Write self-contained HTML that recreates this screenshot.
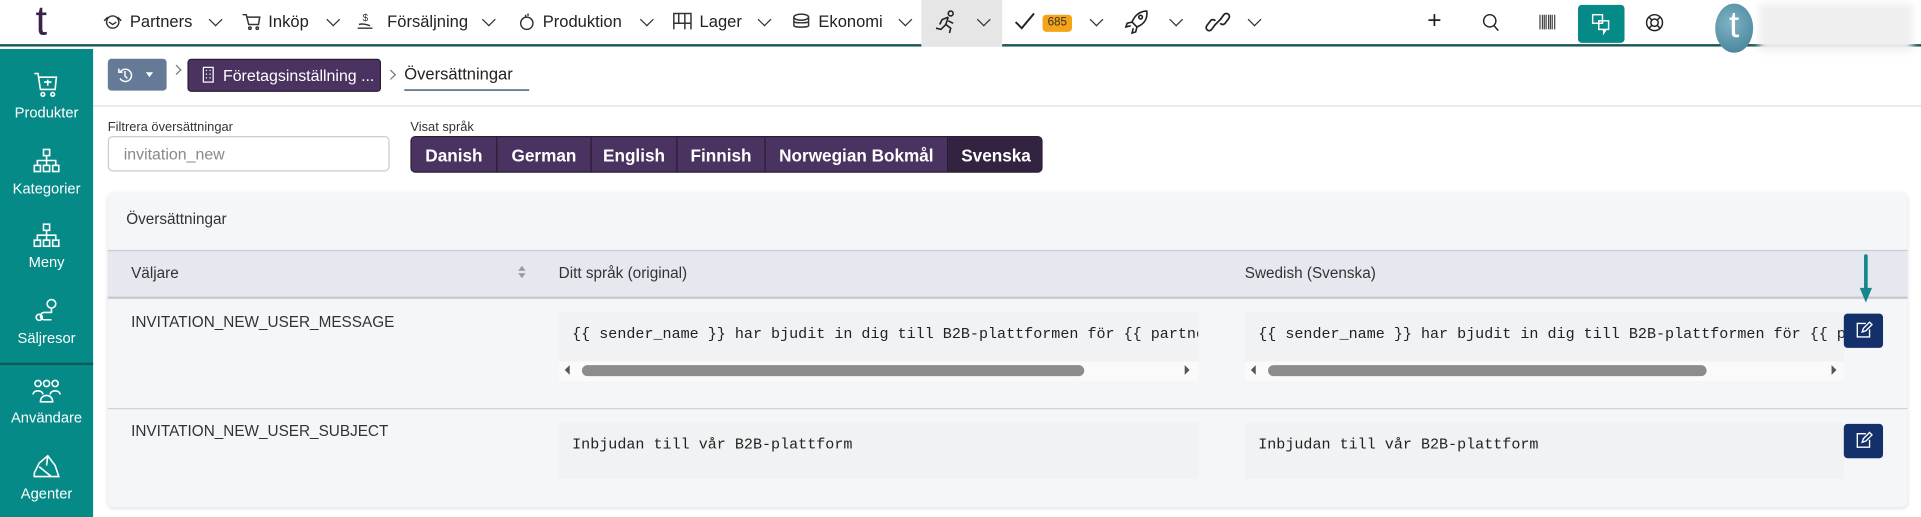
<!DOCTYPE html>
<html><head><meta charset="utf-8">
<style>
*{box-sizing:border-box;margin:0;padding:0}
html,body{width:1921px;height:516px;overflow:hidden;background:#fff}
#w{position:absolute;left:0;top:0;width:1568px;height:421.2px;transform:scale(1.22513);transform-origin:0 0;font-family:"Liberation Sans",sans-serif;color:#222}
.a{position:absolute}
.nav{font-size:13.5px;color:#222;top:10px;white-space:nowrap}
.chev{position:absolute;top:12px;width:8px;height:8px;border-right:1.2px solid #333;border-bottom:1.2px solid #333;transform:rotate(45deg)}
svg{position:absolute;overflow:visible}
.side{position:absolute;left:0;width:76px;text-align:center;color:#fff;font-size:12px}
.btn{position:absolute;top:0;height:30px;line-height:30px;color:#fff;font-weight:bold;font-size:14px;text-align:center;border-right:1px solid #2a1d35}
.code{position:absolute;background:#f1f2f3;font-family:"Liberation Mono",monospace;font-size:12.3px;color:#222;white-space:nowrap;overflow:hidden}
.edit{position:absolute;width:32px;height:28px;background:#13306a;border-radius:3px}
</style></head><body><div id="w">
<!-- top nav -->
<div class="a" style="left:0;top:0;width:1568px;height:38px;background:#fff;border-bottom:2px solid #1d5657"></div>
<div class="a" style="left:29px;top:0;font-size:34px;color:#3a2248;font-family:'Liberation Sans',sans-serif;line-height:34px">t</div>
<svg style="left:84px;top:11px" width="16" height="14" viewBox="0 0 16 14" fill="none" stroke="#333" stroke-width="1.2"><circle cx="8" cy="7" r="5"/><path d="M1 6l3-3M15 6l-3-3M5 7l3 2 3-2"/></svg>
<div class="a nav" style="left:106px">Partners</div><div class="chev" style="left:172px"></div>
<svg style="left:198px;top:11px" width="15" height="14" viewBox="0 0 15 14" fill="none" stroke="#333" stroke-width="1.2"><path d="M0 1h3l2 8h8l1-6H4"/><circle cx="6" cy="12" r="1"/><circle cx="12" cy="12" r="1"/></svg>
<div class="a nav" style="left:219px">Inköp</div><div class="chev" style="left:268px"></div>
<svg style="left:291px;top:9px" width="15" height="16" viewBox="0 0 15 16" fill="none" stroke="#333" stroke-width="1.2"><path d="M1 14h12M2 11c3-1 6 0 9 1"/><text x="5" y="8" font-size="8" fill="#333" stroke="none">$</text></svg>
<div class="a nav" style="left:316px">Försäljning</div><div class="chev" style="left:395px"></div>
<svg style="left:423px;top:9px" width="14" height="16" viewBox="0 0 14 16" fill="none" stroke="#333" stroke-width="1.2"><circle cx="7" cy="10" r="5"/><path d="M6 3v2M8 2v2"/></svg>
<div class="a nav" style="left:443px">Produktion</div><div class="chev" style="left:524px"></div>
<svg style="left:549px;top:10px" width="16" height="15" viewBox="0 0 16 15" fill="none" stroke="#333" stroke-width="1.2"><path d="M1 14V1h14v13M1 9h14M5 1v8M10 1v13"/></svg>
<div class="a nav" style="left:571px">Lager</div><div class="chev" style="left:620px"></div>
<svg style="left:647px;top:11px" width="15" height="13" viewBox="0 0 15 13" fill="none" stroke="#333" stroke-width="1.2"><ellipse cx="7" cy="3" rx="6" ry="2.5"/><path d="M1 3v7c0 1.5 12 1.5 12 0V3M1 6.5c0 1.5 12 1.5 12 0"/></svg>
<div class="a nav" style="left:668px">Ekonomi</div><div class="chev" style="left:735px"></div>
<div class="a" style="left:752px;top:0;width:66px;height:38px;background:#e6e6e6"></div>
<svg style="left:762px;top:8px" width="20" height="20" viewBox="0 0 20 20" fill="none" stroke="#222" stroke-width="1.3"><circle cx="14" cy="3" r="2"/><path d="M12 6l-5 2-2 4M12 6l-2 6 4 3-1 4M10 12l-4 4-4-1M12 9l4 2"/></svg>
<div class="chev" style="left:799px"></div>
<svg style="left:828px;top:10px" width="17" height="15" viewBox="0 0 17 15" fill="none" stroke="#222" stroke-width="1.6"><path d="M1 8l5 5L16 1"/></svg>
<div class="a" style="left:851px;top:12px;width:24px;height:14px;background:#f4a416;border-radius:3px;font-size:9.5px;color:#333;text-align:center;line-height:14px">685</div>
<div class="chev" style="left:891px"></div>
<svg style="left:918px;top:8px" width="20" height="20" viewBox="0 0 20 20" fill="none" stroke="#222" stroke-width="1.3"><path d="M18 1c-6 0-10 4-12 9l4 4c5-2 9-6 8-13zM6 10l-4 1-1 3 4-1M10 14l-1 4-3 1 1-4"/><circle cx="13" cy="6" r="1.5"/></svg>
<div class="chev" style="left:956px"></div>
<svg style="left:984px;top:8px" width="20" height="20" viewBox="0 0 20 20" fill="none" stroke="#222" stroke-width="1.4"><path d="M8 12l-3 4a2.5 2.5 0 0 1-4-3l3-4a2.5 2.5 0 0 1 4 0M12 8l3-4a2.5 2.5 0 0 1 4 3l-3 4a2.5 2.5 0 0 1-4 0M7 13l6-6"/></svg>
<div class="chev" style="left:1020px"></div>
<div class="a" style="left:1165px;top:6px;font-size:20px;color:#222">+</div>
<svg style="left:1210px;top:11px" width="14" height="15" viewBox="0 0 14 15" fill="none" stroke="#222" stroke-width="1.2"><circle cx="6" cy="6" r="5"/><path d="M9.5 10l3.5 4"/></svg>
<svg style="left:1256px;top:12px" width="14" height="12" viewBox="0 0 14 12" stroke="#444" stroke-width="1"><path d="M1 0v12M3 0v12M4.5 0v12M6 0v12M8 0v12M9.5 0v12M11 0v12M13 0v12"/></svg>
<div class="a" style="left:1288px;top:4px;width:38px;height:31px;background:#068a87;border-radius:3px"></div>
<svg style="left:1299px;top:11px" width="16" height="17" viewBox="0 0 16 17" fill="none" stroke="#fff" stroke-width="1.2"><rect x="1" y="1" width="8" height="7"/><rect x="6" y="6" width="8" height="7"/><path d="M10 13v3l2-3"/></svg>
<svg style="left:1343px;top:11px" width="15" height="15" viewBox="0 0 15 15" fill="none" stroke="#222" stroke-width="1.2"><circle cx="7.5" cy="7.5" r="6.5"/><circle cx="7.5" cy="7.5" r="3"/><path d="M3 3l2.3 2.3M12 3l-2.3 2.3M3 12l2.3-2.3M12 12l-2.3-2.3"/></svg>
<div class="a" style="left:1400px;top:3px;width:31px;height:40px;border-radius:50%;background:radial-gradient(circle at 40% 40%,#7fb3c4,#3e7c93);color:#fff;font-size:30px;text-align:center;line-height:36px">t</div>
<div class="a" style="left:1436px;top:3px;width:125px;height:39px;background:#efefef;filter:blur(3px)"></div>
<!-- sidebar -->
<div class="a" style="left:0;top:40px;width:76px;height:382px;background:#068a87"></div>
<div class="a" style="left:0;top:296px;width:76px;height:2px;background:#13595a"></div>
<svg style="left:28px;top:59px" width="20" height="22" viewBox="0 0 20 22" fill="none" stroke="#fff" stroke-width="1.3"><path d="M0 1h3l2 13h12l1-10H4M8 8h6M11 6v5"/><circle cx="7" cy="18" r="1.5"/><circle cx="15" cy="18" r="1.5"/></svg>
<div class="side" style="top:85px">Produkter</div>
<svg style="left:27px;top:121px" width="22" height="20" viewBox="0 0 22 20" fill="none" stroke="#fff" stroke-width="1.3"><rect x="8.5" y="1" width="5" height="5"/><rect x="1" y="14" width="5" height="5"/><rect x="8.5" y="14" width="5" height="5"/><rect x="16" y="14" width="5" height="5"/><path d="M11 6v8M3.5 14v-4h15v4"/></svg>
<div class="side" style="top:147px">Kategorier</div>
<svg style="left:27px;top:182px" width="22" height="20" viewBox="0 0 22 20" fill="none" stroke="#fff" stroke-width="1.3"><rect x="8.5" y="1" width="5" height="5"/><rect x="1" y="14" width="5" height="5"/><rect x="8.5" y="14" width="5" height="5"/><rect x="16" y="14" width="5" height="5"/><path d="M11 6v8M3.5 14v-4h15v4"/></svg>
<div class="side" style="top:207px">Meny</div>
<svg style="left:28px;top:243px" width="20" height="22" viewBox="0 0 20 22" fill="none" stroke="#fff" stroke-width="1.3"><circle cx="14" cy="5" r="3.5"/><circle cx="4" cy="16" r="2.5"/><path d="M14 9v3H8a3 3 0 0 0 0 6h6"/></svg>
<div class="side" style="top:269px">Säljresor</div>
<svg style="left:26px;top:309px" width="24" height="20" viewBox="0 0 24 20" fill="none" stroke="#fff" stroke-width="1.3"><circle cx="5" cy="4" r="2.5"/><circle cx="12" cy="4" r="2.5"/><circle cx="19" cy="4" r="2.5"/><path d="M1 13c0-4 8-4 8 0M15 13c0-4 8-4 8 0M7 19c0-7 10-7 10 0z"/></svg>
<div class="side" style="top:334px">Användare</div>
<svg style="left:27px;top:371px" width="22" height="20" viewBox="0 0 22 20" fill="none" stroke="#fff" stroke-width="1.3"><path d="M1 18h20l-3-9-6-8-7 6-4 8zM5 10l10 8M12 1l-1 8"/></svg>
<div class="side" style="top:396px">Agenter</div>
<!-- breadcrumb -->
<div class="a" style="left:88px;top:48px;width:48px;height:26px;background:#647a96;border-radius:3px"></div>
<svg style="left:96px;top:55px" width="12" height="13" viewBox="0 0 12 13" fill="none" stroke="#fff" stroke-width="1.2"><path d="M2 4a5 5 0 1 1 0 5M1 1v3h3M6 3v4l2 2"/></svg>
<div class="a" style="left:119px;top:59px;width:0;height:0;border-left:3.5px solid transparent;border-right:3.5px solid transparent;border-top:4px solid #fff"></div>
<div class="a" style="left:141px;top:54px;width:6px;height:6px;border-right:1px solid #777;border-top:1px solid #777;transform:rotate(45deg)"></div>
<div class="a" style="left:153px;top:48px;width:158px;height:27px;background:#4a3360;border:1px solid #2a1d35;border-radius:3px;color:#fff;font-size:13px;line-height:25px;padding-left:28px">Företagsinställning ...</div>
<svg style="left:165px;top:54px" width="10" height="14" viewBox="0 0 10 14" fill="none" stroke="#fff" stroke-width="1"><rect x="1" y="1" width="8" height="12"/><path d="M3.5 3v1M6.5 3v1M3.5 6v1M6.5 6v1M3.5 9v1M6.5 9v1"/></svg>
<div class="a" style="left:316px;top:58px;width:6px;height:6px;border-right:1px solid #777;border-top:1px solid #777;transform:rotate(45deg)"></div>
<div class="a" style="left:330px;top:53px;font-size:13.5px;color:#222">Översättningar</div>
<div class="a" style="left:330px;top:73px;width:102px;height:1px;background:#1d3d5e"></div>
<div class="a" style="left:76px;top:86px;width:1492px;height:1px;background:#ddd"></div>
<!-- filters -->
<div class="a" style="left:88px;top:98px;font-size:10.5px;color:#333">Filtrera översättningar</div>
<div class="a" style="left:88px;top:111px;width:230px;height:29px;border:1px solid #c9ccd2;border-radius:4px;font-size:13px;color:#888;padding:6px 0 0 12px">invitation_new</div>
<div class="a" style="left:335px;top:98px;font-size:10.5px;color:#333">Visat språk</div>
<div class="a" style="left:335px;top:111px;width:516px;height:30px;background:#4a3360;border-radius:4px;overflow:hidden;border:1px solid #2a1d35">
<div class="btn" style="left:0;width:70px">Danish</div>
<div class="btn" style="left:70px;width:77px">German</div>
<div class="btn" style="left:147px;width:70px">English</div>
<div class="btn" style="left:217px;width:72px">Finnish</div>
<div class="btn" style="left:289px;width:149px">Norwegian Bokmål</div>
<div class="btn" style="left:438px;width:78px;background:#322340;border:none">Svenska</div>
</div>
<!-- card -->
<div class="a" style="left:88px;top:157px;width:1469px;height:257px;background:#f5f6f8;border-radius:5px;box-shadow:0 1px 3px rgba(0,0,0,.12)"></div>
<div class="a" style="left:103px;top:172px;font-size:12.5px;color:#333">Översättningar</div>
<div class="a" style="left:88px;top:204px;width:1469px;height:40px;background:#e6e8ef;border-top:1px solid #c8ccd2;border-bottom:2px solid #c8ccd2"></div>
<div class="a" style="left:107px;top:216px;font-size:12.5px;color:#333">Väljare</div>
<div class="a" style="left:423px;top:217px;border-left:3.5px solid transparent;border-right:3.5px solid transparent;border-bottom:4px solid #999"></div>
<div class="a" style="left:423px;top:223px;border-left:3.5px solid transparent;border-right:3.5px solid transparent;border-top:4px solid #999"></div>
<div class="a" style="left:456px;top:216px;font-size:12.5px;color:#333">Ditt språk (original)</div>
<div class="a" style="left:1016px;top:216px;font-size:12.5px;color:#333">Swedish (Svenska)</div>
<svg style="left:1517px;top:207px" width="12" height="40" viewBox="0 0 12 40"><path d="M6 2v28" stroke="#15868a" stroke-width="3" stroke-linecap="round"/><path d="M1 28h10l-5 12z" fill="#15868a"/></svg>
<div class="a" style="left:107px;top:256px;font-size:12.5px;color:#333">INVITATION_NEW_USER_MESSAGE</div>
<div class="code" style="left:456px;top:255px;width:522px;height:56px"><div style="padding:11px 0 0 11px">{{ sender_name }} har bjudit in dig till B2B-plattformen för {{ partner_name }}</div>
<div class="a" style="left:0;top:40px;width:522px;height:16px;background:#fafafa"></div>
<div class="a" style="left:19px;top:43px;width:410px;height:9px;background:#8c8c8c;border-radius:5px"></div>
<div class="a" style="left:5px;top:43px;border-top:4px solid transparent;border-bottom:4px solid transparent;border-right:4px solid #555"></div>
<div class="a" style="left:511px;top:43px;border-top:4px solid transparent;border-bottom:4px solid transparent;border-left:4px solid #555"></div></div>
<div class="code" style="left:1016px;top:255px;width:489px;height:56px"><div style="padding:11px 0 0 11px">{{ sender_name }} har bjudit in dig till B2B-plattformen för {{ partner_name }}</div>
<div class="a" style="left:0;top:40px;width:489px;height:16px;background:#fafafa"></div>
<div class="a" style="left:19px;top:43px;width:358px;height:9px;background:#8c8c8c;border-radius:5px"></div>
<div class="a" style="left:5px;top:43px;border-top:4px solid transparent;border-bottom:4px solid transparent;border-right:4px solid #555"></div>
<div class="a" style="left:479px;top:43px;border-top:4px solid transparent;border-bottom:4px solid transparent;border-left:4px solid #555"></div></div>
<div class="edit" style="left:1505px;top:256px"></div>
<svg style="left:1515px;top:262px" width="13" height="14" viewBox="0 0 13 14" fill="none" stroke="#fff" stroke-width="1.1"><path d="M8 2H1v11h10V7M5 9l1-3 5-5 2 2-5 5z"/></svg>
<div class="a" style="left:88px;top:333px;width:1469px;height:1px;background:#d0d3d8"></div>
<div class="a" style="left:107px;top:345px;font-size:12.5px;color:#333">INVITATION_NEW_USER_SUBJECT</div>
<div class="code" style="left:456px;top:345px;width:522px;height:46px;padding:11px 0 0 11px">Inbjudan till vår B2B-plattform</div>
<div class="code" style="left:1016px;top:345px;width:489px;height:46px;padding:11px 0 0 11px">Inbjudan till vår B2B-plattform</div>
<div class="edit" style="left:1505px;top:346px"></div>
<svg style="left:1515px;top:352px" width="13" height="14" viewBox="0 0 13 14" fill="none" stroke="#fff" stroke-width="1.1"><path d="M8 2H1v11h10V7M5 9l1-3 5-5 2 2-5 5z"/></svg>
</div></body></html>
